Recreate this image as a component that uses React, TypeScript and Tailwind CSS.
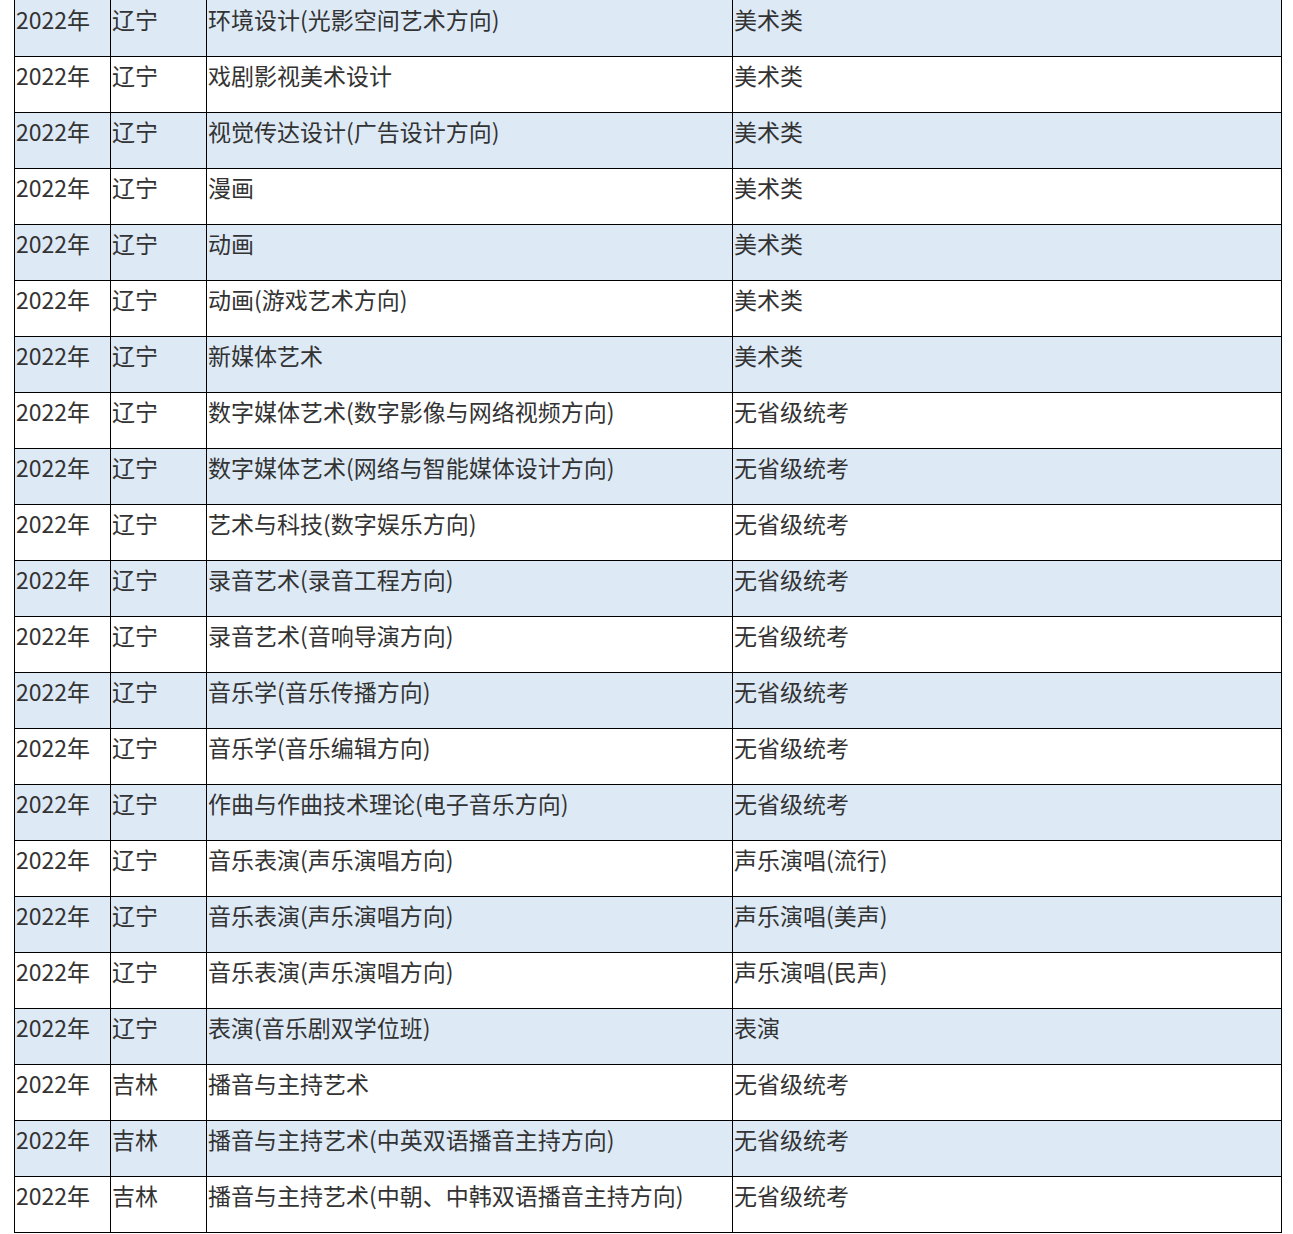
const ROWS: [string, string, string, string][] = [
  ['2022年', '辽宁', '环境设计(光影空间艺术方向)', '美术类'],
  ['2022年', '辽宁', '戏剧影视美术设计', '美术类'],
  ['2022年', '辽宁', '视觉传达设计(广告设计方向)', '美术类'],
  ['2022年', '辽宁', '漫画', '美术类'],
  ['2022年', '辽宁', '动画', '美术类'],
  ['2022年', '辽宁', '动画(游戏艺术方向)', '美术类'],
  ['2022年', '辽宁', '新媒体艺术', '美术类'],
  ['2022年', '辽宁', '数字媒体艺术(数字影像与网络视频方向)', '无省级统考'],
  ['2022年', '辽宁', '数字媒体艺术(网络与智能媒体设计方向)', '无省级统考'],
  ['2022年', '辽宁', '艺术与科技(数字娱乐方向)', '无省级统考'],
  ['2022年', '辽宁', '录音艺术(录音工程方向)', '无省级统考'],
  ['2022年', '辽宁', '录音艺术(音响导演方向)', '无省级统考'],
  ['2022年', '辽宁', '音乐学(音乐传播方向)', '无省级统考'],
  ['2022年', '辽宁', '音乐学(音乐编辑方向)', '无省级统考'],
  ['2022年', '辽宁', '作曲与作曲技术理论(电子音乐方向)', '无省级统考'],
  ['2022年', '辽宁', '音乐表演(声乐演唱方向)', '声乐演唱(流行)'],
  ['2022年', '辽宁', '音乐表演(声乐演唱方向)', '声乐演唱(美声)'],
  ['2022年', '辽宁', '音乐表演(声乐演唱方向)', '声乐演唱(民声)'],
  ['2022年', '辽宁', '表演(音乐剧双学位班)', '表演'],
  ['2022年', '吉林', '播音与主持艺术', '无省级统考'],
  ['2022年', '吉林', '播音与主持艺术(中英双语播音主持方向)', '无省级统考'],
  ['2022年', '吉林', '播音与主持艺术(中朝、中韩双语播音主持方向)', '无省级统考'],
]

const WIDTHS = ['w-[96px]', 'w-[96px]', 'w-[526px]', 'w-[549px]']

export default function App() {
  return (
    <div className="bg-white min-h-[1234px] pl-[14px] font-['Noto_Sans_CJK_SC',sans-serif] text-[23px] text-[#333]">
      <div className="w-[1268px]">
        {ROWS.map((row, i) => (
          <div
            key={i}
            className={`flex border-b border-r border-black ${i === 0 ? 'h-[57px]' : 'h-[56px]'} ${i % 2 === 0 ? 'bg-[#ddeaf6]' : 'bg-white'}`}
          >
            {row.map((cell, j) => (
              <div key={j} className={`${WIDTHS[j]} shrink-0 border-l border-black pl-[1px] ${i === 0 ? 'pt-[2px]' : 'pt-[1px]'} leading-normal whitespace-nowrap`}>
                {cell}
              </div>
            ))}
          </div>
        ))}
      </div>
    </div>
  )
}
